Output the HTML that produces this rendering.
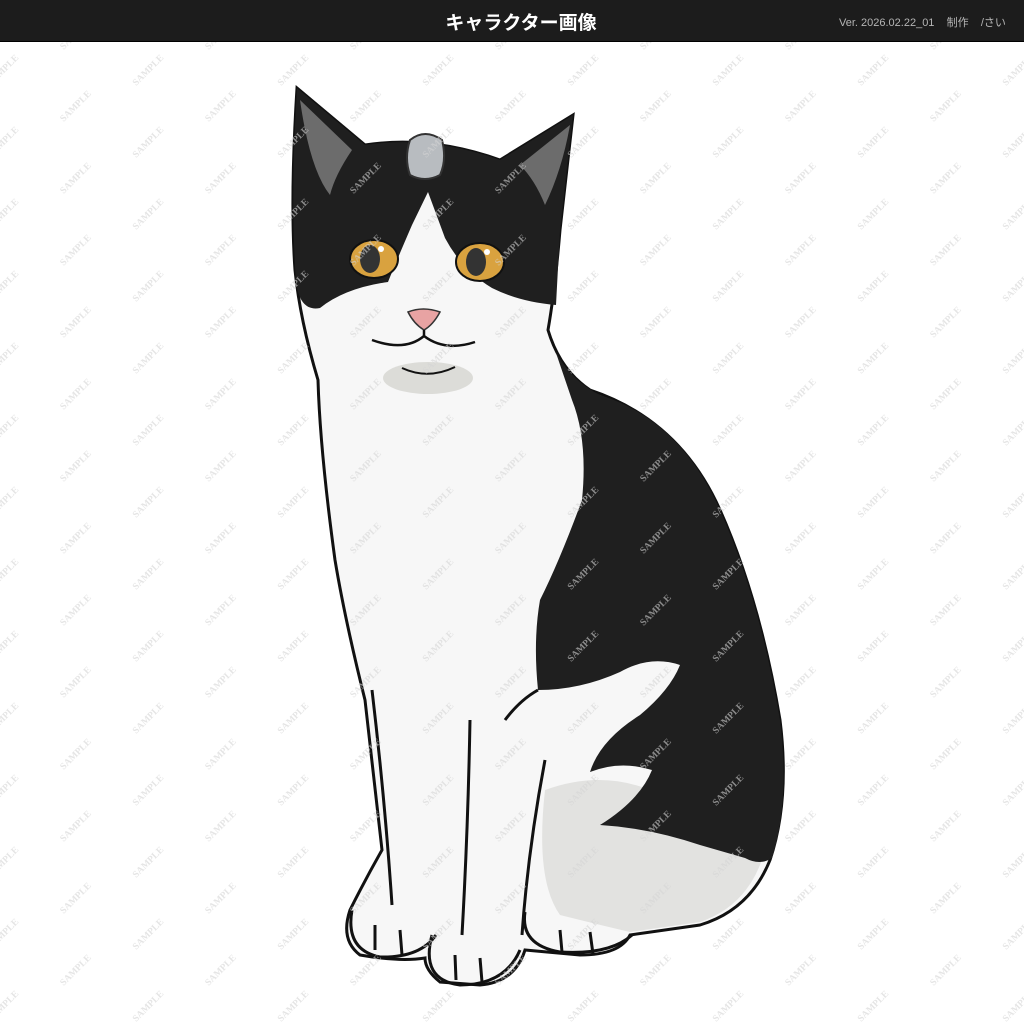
<!DOCTYPE html>
<html><head><meta charset="utf-8">
<style>
html,body{margin:0;padding:0;width:1024px;height:1024px;overflow:hidden;background:#fff;font-family:"Liberation Sans","Noto Sans CJK JP",sans-serif;}
#hdr{position:absolute;left:0;top:0;width:1024px;height:41px;background:#1c1c1c;border-bottom:1px solid #000;}
#title{position:absolute;left:0;width:1042px;top:8px;text-align:center;color:#fff;font-weight:bold;font-size:19px;}
#ver{position:absolute;left:839px;top:14px;color:#b5b5b5;font-size:11px;white-space:pre;}
svg{position:absolute;left:0;top:0;}
</style></head><body>
<svg width="1024" height="1024" viewBox="0 0 1024 1024">
<defs>
<pattern id="wm" patternUnits="userSpaceOnUse" x="3" y="-2" width="145" height="72">
<g font-family="Liberation Serif,serif" font-weight="bold" font-size="9.5" fill="#d4d4d4" text-anchor="middle">
<text transform="translate(0,0) rotate(-45)" dy="3">SAMPLE</text>
<text transform="translate(145,0) rotate(-45)" dy="3">SAMPLE</text>
<text transform="translate(0,72) rotate(-45)" dy="3">SAMPLE</text>
<text transform="translate(145,72) rotate(-45)" dy="3">SAMPLE</text>
<text transform="translate(72.5,36) rotate(-45)" dy="3">SAMPLE</text>
</g>
</pattern>
</defs>
<path d="M297,88 L365,145 Q430,135 500,160 L573,115 L560,230 Q555,290 548,330 Q560,370 590,390 Q680,420 720,510 Q760,600 780,720 Q790,800 770,860 Q750,910 700,925 L630,935 Q620,955 580,955 L525,950 Q515,982 480,985 L440,982 Q425,970 425,958 Q400,962 360,955 Q340,940 350,910 Q365,880 382,850 L365,700 Q345,620 335,560 Q320,450 318,380 Q300,320 295,270 Q290,200 297,88 Z" fill="#f7f7f7" stroke="#111" stroke-width="3"/>
<path d="M545,790 Q600,770 650,790 Q720,800 765,850 Q750,905 700,922 L630,932 Q600,925 560,915 Q535,880 545,790Z" fill="#e2e2e0"/>
<!-- black head with blaze -->
<path d="M297,88 L365,145 Q430,135 500,160 L573,115 L560,230 L556,305 Q520,302 492,288 Q462,270 445,238 L428,192 L412,225 Q396,262 388,282 Q345,288 320,308 Q300,312 296,282 Q290,200 297,88Z" fill="#1f1f1f"/>
<path d="M300,100 L352,150 Q335,175 330,195 Q310,170 300,100Z" fill="#6c6c6c"/>
<path d="M570,125 L520,165 Q535,180 545,205 Q562,170 570,125Z" fill="#6c6c6c"/>
<!-- black body -->
<path d="M555,350 Q570,380 600,395 Q680,420 720,510 Q760,600 780,720 Q790,800 772,858 Q760,866 745,858 L700,845 Q650,828 600,825 Q640,800 652,770 Q620,760 590,772 Q600,740 640,715 Q670,690 680,665 Q650,655 620,672 Q580,690 538,690 Q533,640 540,600 Q560,560 582,500 Q588,440 572,400 Z" fill="#1f1f1f"/>
<ellipse cx="428" cy="378" rx="45" ry="16" fill="#dcdcd8"/>
<g stroke="#111" stroke-width="2">
<ellipse cx="374" cy="259" rx="24" ry="19" fill="#d9a23f"/>
<ellipse cx="480" cy="262" rx="24" ry="19" fill="#d9a23f"/>
</g>
<ellipse cx="370" cy="259" rx="10" ry="14" fill="#333"/>
<ellipse cx="476" cy="262" rx="10" ry="14" fill="#333"/>
<circle cx="381" cy="249" r="3" fill="#fff"/><circle cx="487" cy="252" r="3" fill="#fff"/>
<path d="M408,312 Q423,306 440,312 Q433,325 424,330 Q414,324 408,312Z" fill="#e8a3a3" stroke="#333" stroke-width="1.5"/>
<path d="M424,330 L424,336 Q405,352 372,340 M424,336 Q445,352 475,342" fill="none" stroke="#111" stroke-width="2.5"/>
<path d="M402,368 Q428,380 455,367" fill="none" stroke="#111" stroke-width="2"/>
<path d="M410,140 Q425,128 442,140 Q447,160 440,175 Q425,183 410,175 Q404,158 410,140Z" fill="#b8bcc0" stroke="#333" stroke-width="2"/>
<g fill="none" stroke="#111" stroke-width="3">
<path d="M372,690 Q385,800 392,905"/>
<path d="M470,720 Q468,830 462,935"/>
<path d="M545,760 Q528,850 522,935"/>
<path d="M538,690 Q520,700 505,720"/>
<path d="M352,910 Q345,950 380,957 Q420,958 436,935"/>
<path d="M432,935 Q420,980 460,985 Q505,985 520,950"/>
<path d="M525,912 Q520,945 560,952 Q610,955 632,935"/>
<path d="M375,925 L375,950 M400,930 L402,955 M455,955 L456,980 M480,958 L482,982 M560,930 L562,952 M590,932 L593,954"/>
</g>
<rect x="0" y="42" width="1024" height="982" fill="url(#wm)" opacity="0.6"/>
</svg>
<div id="hdr"><div id="title">キャラクター画像</div><div id="ver">Ver. 2026.02.22_01    制作    /さい</div></div>
</body></html>
